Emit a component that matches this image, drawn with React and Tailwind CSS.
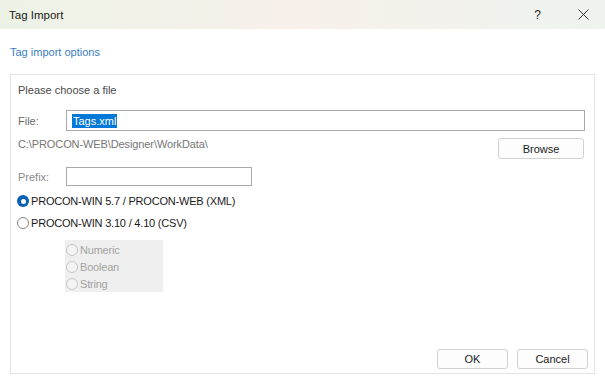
import React from 'react';

const font = { fontFamily: '"Liberation Sans", Arial, sans-serif' };

function Radio({ checked, disabled, label }) {
  return (
    <div className="flex items-center gap-[2px]">
      {checked ? (
        <span className="w-[12px] h-[12px] rounded-full bg-[#0a5fb4] flex items-center justify-center">
          <span className="w-[5px] h-[5px] rounded-full bg-white" />
        </span>
      ) : (
        <span
          className={`w-[12px] h-[12px] rounded-full border ${
            disabled ? 'border-[#c6c6c6] bg-[#f4f4f4]' : 'border-[#858585] bg-white'
          }`}
        />
      )}
      <span className={`tracking-[-0.2px] ${disabled ? 'text-[#a3a3a3]' : 'text-[#1a1a1a]'}`}>{label}</span>
    </div>
  );
}

function Button({ children, className = '' }) {
  return (
    <div
      className={`h-[20px] rounded-[3px] border border-[#d0d0d0] bg-[#fdfdfd] flex items-center justify-center text-[#1a1a1a] ${className}`}
    >
      {children}
    </div>
  );
}

export default function App() {
  return (
    <div className="w-[605px] h-[387px] bg-white flex flex-col text-[11px] leading-[14px]" style={font}>
      <div className="h-[29px] shrink-0 flex items-center bg-linear-to-r from-[#edf2e6] via-[#f7f0ea] to-[#eef3ee] pl-[9px]">
        <span className="text-[11.5px] text-[#1a1a1a]">Tag Import</span>
        <span className="ml-auto mr-[37px] text-[12px] text-[#222]">?</span>
        <svg width="11" height="11" viewBox="0 0 11 11" className="mr-[16px]">
          <path d="M0.5 0.5 L10.5 10.5 M10.5 0.5 L0.5 10.5" stroke="#333" strokeWidth="1" />
        </svg>
      </div>

      <div className="px-[10px] flex flex-col">
        <div className="mt-[16px] text-[#3a7cc3]">Tag import options</div>

        <div className="mt-[15px] w-[585px] h-[300px] border border-[#e2e2e2] flex flex-col pl-[7px] pr-[9px] pt-[8px]">
          <div className="text-[#4a4a4a]">Please choose a file</div>

          <div className="mt-[13px] flex items-center">
            <span className="w-[48px] text-[#6a6a6a]">File:</span>
            <div className="flex-1 h-[21px] border border-[#a8a8a8] bg-white flex items-center pl-[5px]">
              <span className="bg-[#0078d7] text-white leading-[14px] px-[1px]">Tags.xml</span>
            </div>
          </div>

          <div className="mt-[7px] flex items-start justify-between">
            <span className="text-[#767676] mt-[-1px] tracking-[-0.1px]">C:\PROCON-WEB\Designer\WorkData\</span>
            <Button className="w-[86px] h-[21px] mr-[1px]">Browse</Button>
          </div>

          <div className="mt-[8px] flex items-center">
            <span className="w-[48px] text-[#8a8a8a]">Prefix:</span>
            <div className="w-[186px] h-[19px] border border-[#a8a8a8] bg-white" />
          </div>

          <div className="mt-[4px] flex flex-col -ml-[1px]">
            <div className="h-[22px] flex items-center">
              <Radio checked label="PROCON-WIN 5.7 / PROCON-WEB (XML)" />
            </div>
            <div className="h-[22px] flex items-center">
              <Radio label="PROCON-WIN 3.10 / 4.10 (CSV)" />
            </div>
          </div>

          <div className="mt-[6px] ml-[47px] w-[98px] h-[52px] bg-[#efefef] pt-[1px] pl-[1px] flex flex-col">
            <div className="h-[17.5px] flex items-center">
              <Radio disabled label="Numeric" />
            </div>
            <div className="h-[17.5px] flex items-center">
              <Radio disabled label="Boolean" />
            </div>
            <div className="h-[17.5px] flex items-center">
              <Radio disabled label="String" />
            </div>
          </div>

          <div className="mt-auto flex justify-end gap-[9px] pb-[4px] -mr-[3px]">
            <Button className="w-[71px]">OK</Button>
            <Button className="w-[71px]">Cancel</Button>
          </div>
        </div>
      </div>
    </div>
  );
}
